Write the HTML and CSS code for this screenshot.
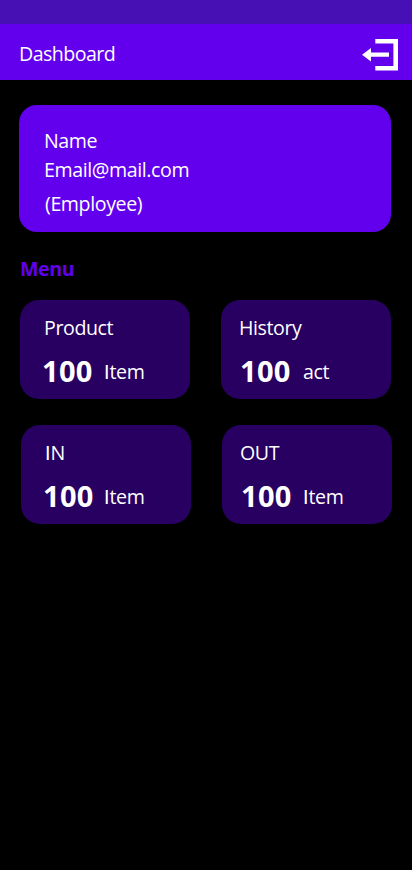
FILE: index.html
```html
<!DOCTYPE html>
<html lang="en">
<head>
<meta charset="utf-8">
<title>Dashboard</title>
<link rel="stylesheet" href="styles.css">
</head>
<body>
<div class="status-bar"></div>
<header class="app-bar">
  <h1 class="title">Dashboard</h1>
  <svg class="logout" viewBox="0 0 36 32" aria-hidden="true">
    <path d="M13.3 0H36V31.6H13.3V27H31.4V4.4H13.3ZM0 15.7L9 9V13.4H27V17.8H9V22.4Z"/>
  </svg>
</header>
<main>
  <section class="profile">
    <p class="name">Name</p>
    <p class="email">Email@mail.com</p>
    <p class="role">(Employee)</p>
  </section>
  <h2 class="menu-title">Menu</h2>
  <div class="menu">
    <div class="row">
      <div class="card"><p class="label">Product</p><p class="stat"><b>100</b><span class="unit plain-i">Item</span></p></div>
      <div class="card right"><p class="label">History</p><p class="stat"><b>100</b><span class="unit">act</span></p></div>
    </div>
    <div class="row lower">
      <div class="card"><p class="label plain-i">IN</p><p class="stat"><b>100</b><span class="unit plain-i">Item</span></p></div>
      <div class="card right"><p class="label">OUT</p><p class="stat"><b>100</b><span class="unit plain-i">Item</span></p></div>
    </div>
  </div>
</main>
</body>
</html>
```
FILE: styles.css
```css
* { box-sizing: border-box; margin: 0; }
body {
  min-height: 870px;
  background: #000;
  color: #fff;
  font: 19.6px/28px "Open Sans", sans-serif;
  letter-spacing: -0.4px;
}
.status-bar { height: 24px; background: #4610b5; }
.app-bar {
  display: flex;
  justify-content: space-between;
  align-items: flex-start;
  height: 56px;
  padding: 15px 14px 0 19px;
  background: #6200ee;
}
.title { margin-top: 1px; font-size: inherit; font-weight: 400; letter-spacing: -0.55px; }
.logout { width: 36px; height: 32px; fill: #fff; }
.profile {
  height: 127px;
  margin: 25px 21px 0 19px;
  padding: 22px 25px;
  border-radius: 18px;
  background: #6200ee;
}
.email { margin-top: 1px; }
.role { margin: 6px 0 0 1px; }
.menu-title {
  margin: 23px 0 0 20px;
  color: #6200ee;
  font-size: 19.6px;
  font-weight: 700;
}
.menu { display: grid; gap: 26px; margin: 17px 0 0 20px; }
.row { display: flex; gap: 31px; }
.lower { margin-left: 1px; }
.card {
  width: 170px;
  height: 99px;
  padding: 14px 0 0 24px;
  border-radius: 19px;
  background: #280061;
}
.right { padding-left: 18px; }
.stat { display: flex; height: 40px; margin-top: 9px; }
.stat b { width: 62px; margin-left: -2px; font-size: 29px; line-height: 40px; letter-spacing: 0.3px; }
.right b { width: 63px; margin-left: 1px; }
.lower .unit { margin-left: -1px; }
.unit { margin-top: 7px; }
/* Lato's capital I has no slab serifs */
.plain-i::first-letter { font-family: Lato, sans-serif; line-height: 0; letter-spacing: 0; }
```
